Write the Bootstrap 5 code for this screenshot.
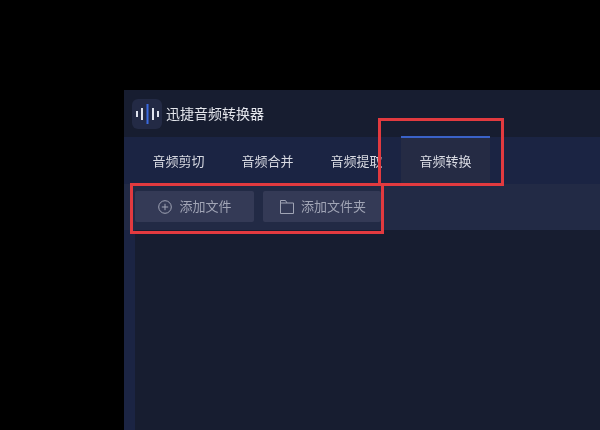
<!DOCTYPE html>
<html lang="zh"><head><meta charset="utf-8">
<link href="https://cdn.jsdelivr.net/npm/bootstrap@5.3.0/dist/css/bootstrap.min.css" rel="stylesheet">
<style>
html,body{height:100%;}
body{background:#000;overflow:hidden;font-family:"Liberation Sans","Noto Sans CJK SC",sans-serif;}
.stage{position:relative;width:600px;height:430px;padding:90px 0 0 124px;}
.appwin{height:340px;background:#171d30;}
.titlebar{height:47px;background:#171d30;padding-left:8px;color:#e4e6ec;font-size:14px;}
.logo-box{width:30px;height:30px;border-radius:6px;background:#232a45;margin-right:4px;}
.title-text{padding-top:1px;}
.tabbar{height:47px;background:#1b2443;padding-left:10px;}
.tabitem{width:89px;height:48px;margin-top:-1px;padding-top:1px;color:#d8dae2;font-size:13px;border-top:2px solid transparent;}
.tabitem.on{background:#252b44;border-top-color:#3a62c8;}
.toolbar{height:46px;background:#222a45;padding:7px 0 0 11px;}
.toolbtn{height:31px;background:#343a56;color:#a0a4b5;font-size:13px;border-radius:2px;}
.btn-a{width:119px;margin-right:9px;padding-left:23px;gap:7.5px;}
.btn-b{width:118px;padding-left:17px;gap:7px;}
.sidebar{width:11px;background:#1b2443;}
.redbox{position:absolute;border:3px solid #e23a3f;}
.rb1{left:378px;top:118px;width:126px;height:68px;}
.rb2{left:130px;top:183px;width:254px;height:51px;}
.gray-text{will-change:opacity;}
</style></head>
<body>
<div class="stage">
  <div class="appwin d-flex flex-column">
    <div class="titlebar d-flex align-items-center">
      <div class="logo-box d-flex align-items-center justify-content-center">
        <svg width="24" height="20" viewBox="0 0 24 20"><g fill="#dfe3ee"><rect x="1" y="7" width="2" height="6"/><rect x="6" y="4" width="2" height="12"/><rect x="17" y="4" width="2" height="12"/><rect x="22" y="7" width="2" height="6"/></g><rect x="11.500" y="0" width="2" height="20" fill="#3a6ae0"/></svg>
      </div>
      <span class="title-text gray-text">迅捷音频转换器</span>
    </div>
    <div class="tabbar d-flex">
      <div class="tabitem d-flex align-items-center justify-content-center"><span class="gray-text">音频剪切</span></div>
      <div class="tabitem d-flex align-items-center justify-content-center"><span class="gray-text">音频合并</span></div>
      <div class="tabitem d-flex align-items-center justify-content-center"><span class="gray-text">音频提取</span></div>
      <div class="tabitem on d-flex align-items-center justify-content-center"><span class="gray-text">音频转换</span></div>
    </div>
    <div class="toolbar d-flex align-items-start">
      <div class="toolbtn btn-a d-flex align-items-center">
        <svg width="14" height="14" viewBox="0 0 14 14" fill="none" stroke="#a0a4b5" stroke-width="1"><circle cx="7" cy="7" r="6.300"/><path d="M7 3.800v6.400M3.800 7h6.400"/></svg>
        <span class="gray-text">添加文件</span>
      </div>
      <div class="toolbtn btn-b d-flex align-items-center">
        <svg width="14" height="14" viewBox="0 0 14 14" fill="none" stroke="#a0a4b5" stroke-width="1"><path d="M.5 13.500V.5h5l1.500 2.500h6.500v10.500zM.5 3h6.500"/></svg>
        <span class="gray-text">添加文件夹</span>
      </div>
    </div>
    <div class="d-flex flex-grow-1"><div class="sidebar"></div></div>
  </div>
  <div class="redbox rb1"></div>
  <div class="redbox rb2"></div>
</div>
<script src="https://cdn.jsdelivr.net/npm/bootstrap@5.3.0/dist/js/bootstrap.bundle.min.js"></script>
</body></html>
